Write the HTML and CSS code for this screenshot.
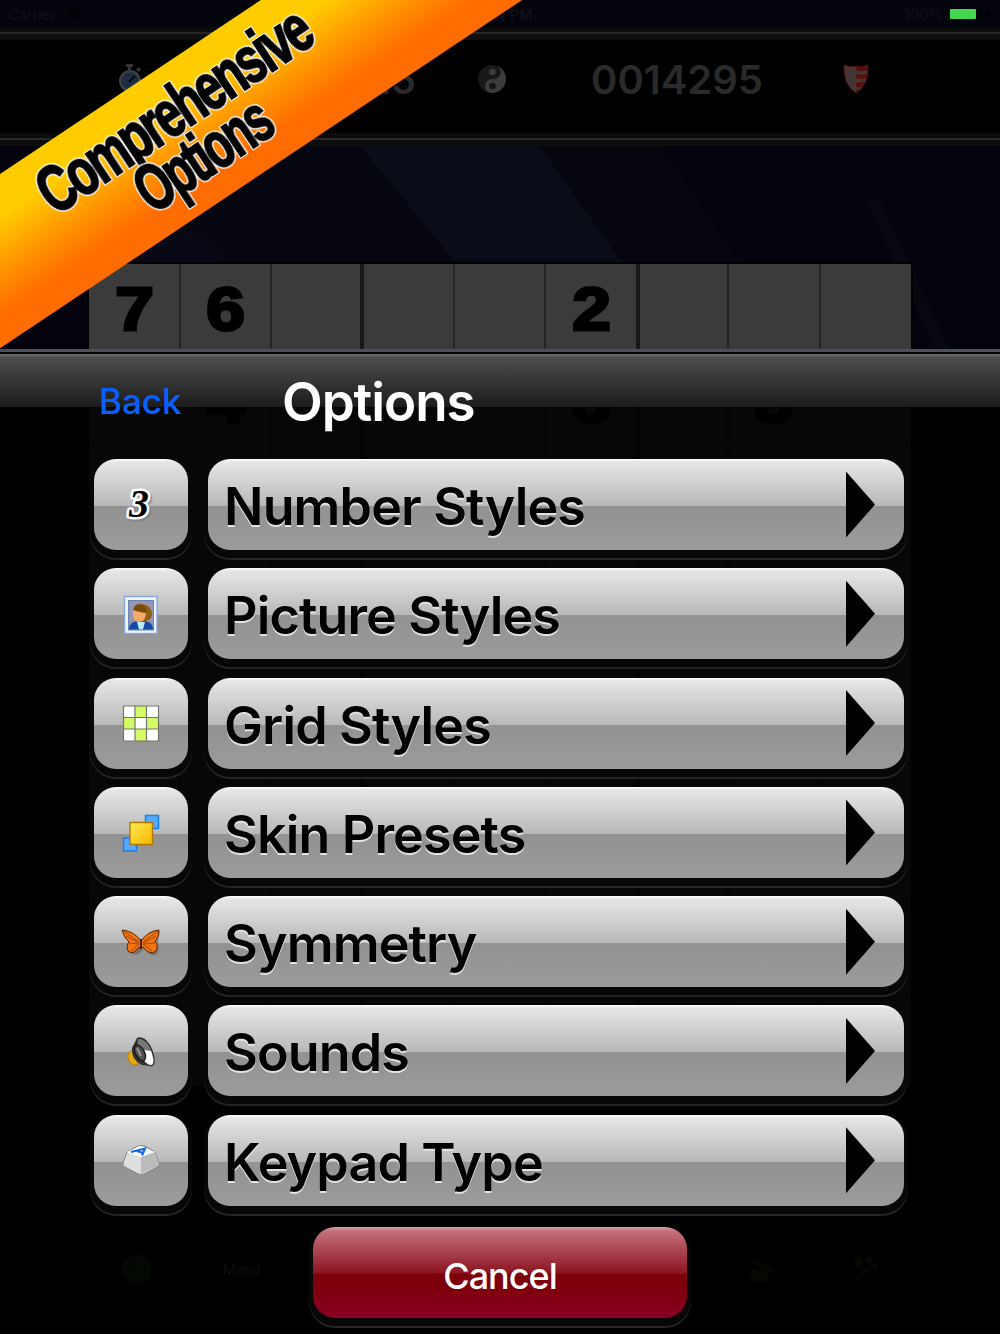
FILE: index.html
```
<!DOCTYPE html>
<html lang="en">
<head>
    <meta charset="UTF-8">
    <meta name="viewport" content="width=device-width, initial-scale=1.0">
    <title>Options</title>
    <link rel="stylesheet" href="styles.css">
</head>
<body>
    <main class="screen">
        <svg class="rays" viewBox="0 0 1000 1334">
            <polygon points="120,146 360,146 455,262 890,800 540,800" fill="#05060f"/>
            <polygon points="360,146 540,146 622,262 1000,800 860,800 455,262" fill="#0a0d18"/>
            <polygon points="540,146 660,146 740,262 622,262" fill="#05060e"/>
            <polygon points="865,200 880,200 950,349 935,349" fill="#06070f"/>
            <polygon points="130,180 190,225 230,262 110,262" fill="#080915"/>
        </svg>
        <div class="status">
            <span>Carrier</span>
            <svg class="wifi" viewBox="0 0 18 13"><path d="M1 5Q9-2 17 5L15 7Q9 2 3 7ZM4 8Q9 4 14 8L12 10Q9 8 6 10ZM7 11Q9 9 11 11L9 13Z"/></svg>
            <span class="clock">4:24 PM</span>
            <span class="power">100%</span>
            <span class="battery"></span>
            <svg class="bolt" viewBox="0 0 8 12"><path d="M5 0L0 7H3L2 12L8 5H5Z"/></svg>
        </div>
        <div class="rail"></div>
        <div class="score">
            <svg class="watch" viewBox="0 0 24 30">
                <path d="M8 0h7v3h-2v4h-3V3H8zM18 5l3-2 2 3-3 2z" fill="#333"/>
                <circle cx="12" cy="17" r="11" fill="#3b3d40"/>
                <circle cx="12" cy="17" r="8.5" fill="#1c2d43"/>
                <path d="M11 18l6-6" stroke="#080808" stroke-width="2"/>
            </svg>
            <span class="time">15</span>
            <svg class="yin" viewBox="0 0 28 28">
                <circle cx="14" cy="14" r="14" fill="#181818"/>
                <path d="M18 0.6A14 14 0 0 1 14 28A7 7 0 0 1 14 14A7 7 0 0 0 18 .6Z" fill="#3c3c3c"/>
                <circle cx="14.5" cy="7" r="3.3" fill="#3b3b3b"/>
                <circle cx="14.5" cy="21" r="3.3" fill="#151515"/>
            </svg>
            <span class="points">0014295</span>
            <svg class="shield" viewBox="0 0 26 30">
                <path d="M1 1Q7 4 13 2Q19 4 25 1Q26 21 13 29Q0 21 1 1Z" fill="#443637" stroke="#4b1510"/>
                <path d="M13 2Q19 4 25 1V6Q19 8 13 6ZM13 10Q19 12 25 9L24 14Q19 16 13 14ZM13 18Q19 19 22 17L20 22Q17 24 13 23ZM13 26L17 25L13 29Z" fill="#56100a"/>
            </svg>
        </div>
        <div class="rail"></div>
        <div class="board">
            <div class="row">
                <b>7</b><b>6</b><b></b><b></b><b></b><b>2</b><b></b><b></b><b></b>
            </div>
            <div class="row">
                <b></b><b>4</b><b></b><b></b><b></b><b>3</b><b></b><b>3</b><b></b>
            </div>
        </div>
        <div class="tools">
            <svg class="help" viewBox="0 0 30 30"><circle cx="15" cy="15" r="13" fill="#143a14" stroke="#333" stroke-width="3"/><path d="M10 11q1-5 5-4q6 1 4 6q-4 2-4 6M15 22v2" fill="none" stroke="#333" stroke-width="3"/></svg>
            <span class="menu">Menu</span>
            <svg class="wizard" viewBox="0 0 30 30"><path d="M1 4L28 15L20 20ZM4 15l16 1 2 11H3z" fill="#3d3313"/></svg>
            <svg class="wand" viewBox="0 0 30 30"><path d="M2 27L19 14" stroke="#333" stroke-width="3"/><path d="M8 2l2 4 4 1-3 3 1 4-4-2-4 2 1-4-3-3 4-1zM19 1l1 3 3 1-2 2v3l-2-2-3 2v-3l-2-2 3-1zM19 13l8-5-2 8z" fill="#4d4016"/></svg>
        </div>

        <section class="sheet">
            <header class="head">
                <a class="back">Back</a>
                <h1>Options</h1>
            </header>
            <div class="list">
                <div class="item">
                    <button class="btn icon">
                        <svg viewBox="0 0 40 40">
                            <text class="three dim" x="10" y="34">3</text>
                            <text class="three" x="8" y="32">3</text>
                        </svg>
                    </button>
                    <button class="btn wide"><span>Number Styles</span><i class="arrow"></i></button>
                </div>
                <div class="item">
                    <button class="btn icon">
                        <svg viewBox="0 0 40 40">
                            <rect x="3.500" y="2.500" width="32.500" height="37" fill="#eef5ff" stroke="#83a3e2" stroke-width="1.3"/>
                            <rect x="7.500" y="6.500" width="25" height="29.500" fill="#9696b3" stroke="#6d81b4"/>
                            <path d="M8 35.500Q8 28 16 27H24Q32 28 32 35.500Z" fill="#124aa8"/>
                            <path d="M16 28h8l-2 7.500h-4z" fill="#b9e8fa"/>
                            <path d="M13 15Q14 9 21 10Q31 11 31 21Q30 27 23 27Z" fill="#926112"/>
                            <path d="M12 15Q11 28 18 28Q25 28 25 18Q18 19 12 15Z" fill="#f4a869"/>
                            <path d="M12 16Q14 9 22 11Q27 14 25 19Q18 18 12 16Z" fill="#794b08"/>
                        </svg>
                    </button>
                    <button class="btn wide"><span>Picture Styles</span><i class="arrow"></i></button>
                </div>
                <div class="item">
                    <button class="btn icon">
                        <svg viewBox="0 0 40 40">
                            <path d="M2.500 3h35v35H2.500z" fill="#fff"/>
                            <path d="M14 3h11.500v35H14zM2.500 14.500h35V26H2.500z" fill="#d2fb66"/>
                            <path d="M14 14.500H25.500V26H14z" fill="#fff"/>
                            <path d="M2.500 3h35v35H2.500zM14 3v35M25.500 3v35M2.500 14.500h35M2.500 26h35" fill="none" stroke="#74746e" stroke-width="1.2"/>
                        </svg>
                    </button>
                    <button class="btn wide"><span>Grid Styles</span><i class="arrow"></i></button>
                </div>
                <div class="item">
                    <button class="btn icon">
                        <svg viewBox="0 0 40 40">
                            <defs><linearGradient id="gold" x2="1" y2="1"><stop stop-color="#ffec50"/><stop offset="1" stop-color="#f7b400"/></linearGradient></defs>
                            <path d="M24.500 3.500h13v13h-13zM2.500 26h13v13h-13z" fill="#55acff" stroke="#1f7be6" stroke-width="1.4"/>
                            <path d="M9 10.500h22.500v22H9z" fill="url(#gold)" stroke="#ad7900" stroke-width="1.4"/>
                        </svg>
                    </button>
                    <button class="btn wide"><span>Skin Presets</span><i class="arrow"></i></button>
                </div>
                <div class="item">
                    <button class="btn icon">
                        <svg viewBox="0 0 40 40">
                            <path d="M4 11L18 18L22 23L39 9L37 21Q39 30 35 33Q29 35 23 26Q17 35 11 32Q6 30 9 22Z" fill="#555" opacity=".5"/>
                            <path d="M1 8Q13 9 20 19Q27 9 38 8Q38 15 34 20Q38 23 35 29Q29 34 22 25L20 27L18 25Q12 34 7 29Q5 23 8 20Q3 16 1 8Z" fill="#f27512" stroke="#602500"/>
                            <path d="M3 9L18 20M5 14L18 21M37 9L22 20M35 14L22 21M8 21L18 22L10 29M34 21L22 22L31 29" fill="none" stroke="#803000" stroke-width=".7"/>
                            <path d="M20 17V26" stroke="#4b2411" stroke-width="2"/>
                        </svg>
                    </button>
                    <button class="btn wide"><span>Symmetry</span><i class="arrow"></i></button>
                </div>
                <div class="item">
                    <button class="btn icon">
                        <svg viewBox="0 0 40 40">
                            <path d="M13 19Q6 20 7 27Q9 35 17 34Z" fill="#e8ac12" stroke="#bb7900"/>
                            <path d="M11 17L16 7Q19 5 24 8Q31 14 33 25Q34 33 31 35L21 34Q10 29 11 17Z" fill="#303030"/>
                            <path d="M17 7Q27 8 31 20Q36 35 30 35Q23 34 19 22Q14 11 17 7Z" fill="#777" stroke="#292929"/>
                            <path d="M22 19L30 20Q35 34 29 34L24 31Z" fill="#fff"/>
                            <ellipse cx="19" cy="22" rx="4.5" ry="8.5" transform="rotate(-28 19 22)" fill="#505050" stroke="#161616" stroke-width="1.3"/>
                            <path d="M16 17L20 25" stroke="#999" stroke-width="1.8"/>
                        </svg>
                    </button>
                    <button class="btn wide"><span>Sounds</span><i class="arrow"></i></button>
                </div>
                <div class="item">
                    <button class="btn icon">
                        <svg viewBox="0 0 40 40">
                            <path d="M6 12L17 6Q20 5 24 6L34 12L38.500 24Q38 26 36 27L23 34Q20 35 17 34L4 27Q1 26 2 23Z" fill="#dedede" stroke="#858585"/>
                            <path d="M20 17L34 12L38 24L36 26L20 34Z" fill="#bbb"/>
                            <path d="M6 12L19 6L34 12L20 17Z" fill="#fbfbfb"/>
                            <path d="M10 12L24 8.500L21 15.500M16 11L22 13" fill="none" stroke="#126be6" stroke-width="2.2"/>
                        </svg>
                    </button>
                    <button class="btn wide"><span>Keypad Type</span><i class="arrow"></i></button>
                </div>
            </div>
            <button class="btn cancel">Cancel</button>
        </section>

        <div class="ribbon">
            <svg viewBox="0 0 900 145">
                <text x="282" y="66" textLength="314" lengthAdjust="spacingAndGlyphs">Comprehensive</text>
                <text x="364" y="119" textLength="149" lengthAdjust="spacingAndGlyphs">Options</text>
            </svg>
        </div>
    </main>
</body>
</html>
```
FILE: styles.css
```
*{
    box-sizing: border-box;
}

body{
    margin: 0;
    background-color: #000;
    font-family: Inter, "Liberation Sans", sans-serif;
}

.screen{
    position: relative;
    width: 1000px;
    height: 1334px;
    overflow: hidden;
    background-color: #04020c;
}

.rays{
    position: absolute;
    width: 1000px;
    height: 1334px;
}

.status{
    position: relative;
    display: flex;
    align-items: center;
    height: 27px;
    padding: 1px 0 0 8px;
    background-color: #04040c;
    color: #111116;
    font-size: 14.500px;
    white-space: nowrap;
}

.wifi{
    flex-shrink: 0;
    width: 18px;
    height: 13px;
    margin-left: 9px;
    fill: #000;
}

.clock{
    width: 450px;
    text-align: right;
    font-weight: 500;
}

.power{
    width: 410px;
    text-align: right;
}

.battery{
    width: 26px;
    height: 10px;
    margin-left: 7px;
    border-radius: 1px;
    background-color: #42d74f;
}

.bolt{
    width: 8px;
    height: 12px;
    margin-left: 9px;
    fill: #000;
}

.rail{
    position: relative;
    height: 13px;
    background: linear-gradient(#0b0b0b 5px, #282828 5px, #282828 7px, #0e0e0e 7px);
}

.score{
    position: relative;
    display: flex;
    align-items: center;
    height: 93px;
    padding: 0 0 15px 118px;
    background-color: #000;
    color: #2a2a2a;
    font-size: 40px;
    font-weight: 600;
}

.watch{
    width: 24px;
    height: 30px;
}

.time{
    width: 274px;
    text-align: right;
}

.yin{
    width: 28px;
    height: 28px;
    margin-left: 62px;
}

.points{
    width: 172px;
    margin-left: 85px;
}

.shield{
    width: 26px;
    height: 30px;
    margin-left: 80px;
}

.board{
    position: relative;
    width: 826px;
    height: 826px;
    margin: 116px 0 0 87px;
    border: 2px solid #000;
    background:
        linear-gradient(90deg, transparent 271px, #181818 271px, #181818 275px, transparent 275px, transparent 547px, #181818 547px, #181818 551px, transparent 551px),
        repeating-linear-gradient(90deg, transparent 0, transparent 89.500px, #262626 89.500px, #262626 91.500px),
        repeating-linear-gradient(transparent 0, transparent 90px, #262626 90px, #262626 91.500px),
        #3b3b3b;
}

.row{
    display: grid;
    grid-template-columns: repeat(9, 1fr);
    height: 91.500px;
}

.row b{
    color: #000;
    font: bold 62px/89px "Liberation Sans", sans-serif;
    text-align: center;
    transform: scaleX(1.120);
    -webkit-text-stroke: 3px #000;
}

.tools{
    position: relative;
    display: flex;
    align-items: center;
    margin-top: 166px;
    padding-left: 122px;
}

.tools svg{
    flex-shrink: 0;
    width: 30px;
    height: 30px;
}

.menu{
    flex-shrink: 0;
    width: 595px;
    padding-left: 71px;
    color: #666;
    font-size: 14px;
}

.tools .wand{
    margin-left: 74px;
}

.sheet{
    position: absolute;
    top: 349px;
    left: 0;
    width: 1000px;
    height: 985px;
    background:
        linear-gradient(#4c5059 3px, #050505 3px, #050505 5px, #6a6a6a 5px, #626262 7px, #4d4d4d 8px, #1c1c1c 58px, transparent 58px),
        rgba(0, 0, 0, .87);
}

.head{
    display: flex;
    align-items: flex-start;
    height: 110px;
    padding: 21px 0 0 99px;
}

.back{
    width: 183px;
    padding-top: 10px;
    color: #0a60ff;
    font-size: 35px;
    font-weight: 500;
}

.head h1{
    margin: 0;
    color: #fff;
    font-size: 53px;
    font-weight: 600;
    letter-spacing: -1.100px;
}

.list{
    display: flex;
    flex-direction: column;
    gap: 18.300px;
    padding-left: 94px;
}

.item{
    display: flex;
    gap: 20px;
}

.btn{
    height: 91px;
    padding: 0;
    border: 0;
    border-radius: 22px;
    background: linear-gradient(#fff 0, #e6e6e6 3px, #b8b8b8 47px, #929292 47px, #9b9b9b);
    box-shadow: 0 4px 0 4px #070707, 0 6px 0 4px #242424;
    font-family: inherit;
}

.icon{
    display: flex;
    align-items: center;
    justify-content: center;
    width: 94px;
}

.icon svg{
    width: 40px;
    height: 40px;
    overflow: visible;
}

.three{
    fill: #000;
    stroke: #fff;
    stroke-width: 5px;
    stroke-linejoin: round;
    paint-order: stroke;
    font: italic bold 40px "Liberation Serif", serif;
}

.dim{
    fill: #666;
    stroke: #777;
    opacity: .5;
}

.wide{
    display: flex;
    align-items: center;
    justify-content: space-between;
    width: 696px;
    padding: 0 29px 0 16px;
    color: #000;
    font-size: 52px;
    font-weight: 600;
    letter-spacing: -.850px;
    text-shadow: 0 1.500px 0 #e2e2e2;
}

.wide span{
    padding-top: 4px;
}

.arrow{
    width: 29px;
    height: 66px;
    background-color: #000;
    clip-path: polygon(0 0, 100% 50%, 0 100%);
}

.cancel{
    display: block;
    width: 374px;
    margin: 21px 0 0 313px;
    padding-top: 8px;
    background: linear-gradient(#d8a0a8 0, #c4717b 4px, #8c1420 46px, #7c0008 47px, #80000e 65px, #880026);
    color: #fff;
    font-size: 36px;
    font-weight: 500;
    letter-spacing: -1px;
}

.ribbon{
    position: absolute;
    top: 318px;
    left: -216px;
    width: 900px;
    height: 145px;
    background: linear-gradient(#ffcc00 25%, #ff9c00 52%, #ff6c00 82%);
    transform: rotate(-33.700deg);
    transform-origin: 0 0;
}

.ribbon svg{
    display: block;
    width: 900px;
    height: 145px;
    overflow: visible;
}

.ribbon text{
    fill: #000;
    stroke: #000;
    stroke-width: 2px;
    font: bold 66px "Liberation Sans Narrow", "Liberation Sans", sans-serif;
    letter-spacing: -4px;
    filter: drop-shadow(1px 0 0 #fff) drop-shadow(-1px 0 0 #fff) drop-shadow(0 1px 0 #fff) drop-shadow(0 -1px 0 #fff);
}
```
